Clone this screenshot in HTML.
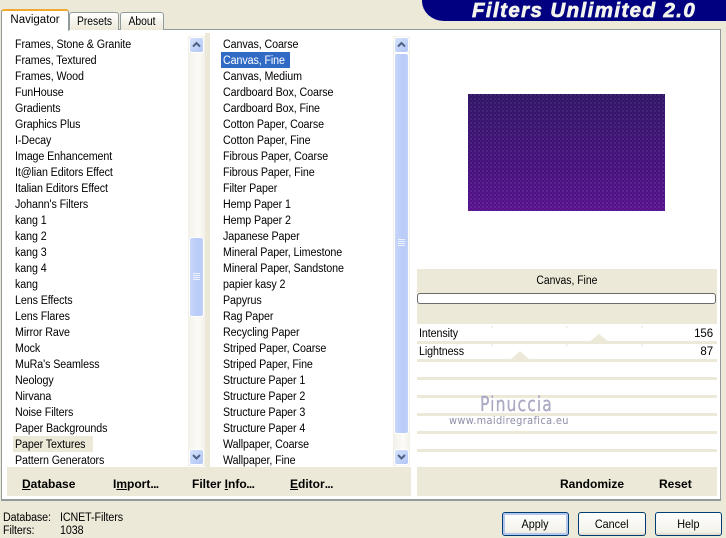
<!DOCTYPE html>
<html><head><meta charset="utf-8"><style>
html,body{margin:0;padding:0;width:726px;height:538px;overflow:hidden;background:#ece9d8}
body{position:relative;font-family:"Liberation Sans",sans-serif;font-size:11.5px;color:#000}
div{position:absolute;box-sizing:border-box;white-space:nowrap}
.it{height:16px;line-height:16px;letter-spacing:-.1px}
.s{transform:scaleX(.93);transform-origin:0 0}
.c{display:inline-block;transform:scaleX(.9);transform-origin:50% 50%}
.d{letter-spacing:-.6px}
.b{font-weight:bold;font-size:12px;top:477px;line-height:15px}
.sb{width:15px;height:16px;border:1px solid #fff;border-radius:3px;background:linear-gradient(135deg,#d6e2fb,#b0c6f5)}
.track{width:17px;background:linear-gradient(90deg,#f2f0e8,#fbfbf8 60%,#f2f0e8)}
.btn{height:24px;border:1px solid #003c74;border-radius:3px;background:linear-gradient(#fff,#f3f2ea 85%,#dcd8c8);text-align:center;line-height:22px;font-size:12px}
.sep{left:417px;width:300px;height:3px;background:#ece9d8}
svg{position:absolute;overflow:visible}
</style></head><body>
<div style="left:422px;top:0;width:304px;height:21px;background:#000080;border-bottom-left-radius:22px 20px"></div>
<div style="left:472px;top:0;height:21px;line-height:21px;color:#f4f4ee;font-weight:bold;font-style:italic;font-size:20.5px;letter-spacing:1.4px;-webkit-text-stroke:.7px #f4f4ee">Filters Unlimited 2.0</div>

<div style="left:1px;top:29px;width:720px;height:472px;background:#fff;border:1px solid #919b9c;border-width:1px 1px 2px 1px"></div>

<div style="left:69px;top:12px;width:50px;height:18px;background:linear-gradient(#fff,#ece9d8);border:1px solid #919b9c;border-bottom:0;border-radius:3px 3px 0 0;text-align:center;line-height:19px"><span class="c">Presets</span></div>
<div style="left:120px;top:12px;width:44px;height:18px;background:linear-gradient(#fff,#ece9d8);border:1px solid #919b9c;border-bottom:0;border-radius:3px 3px 0 0;text-align:center;line-height:19px"><span class="c">About</span></div>
<div style="left:1px;top:9px;width:68px;height:22px;background:#fff;border:1px solid #919b9c;border-top:2px solid #f0a830;border-bottom:0;border-radius:3px 3px 0 0;text-align:center;line-height:18px">Navigator</div>

<div style="left:205px;top:33px;width:5px;height:434px;background:#ece9d8"></div>

<div style="left:13px;top:436px;width:80px;height:16px;background:#ece9d8"></div>
<div style="left:221px;top:52px;width:69px;height:16px;background:#316ac5"></div>

<div class="s" style="left:15px;top:37px">
<div class="it" style="top:0">Frames, Stone &amp; Granite</div>
<div class="it" style="top:16px">Frames, Textured</div>
<div class="it" style="top:32px">Frames, Wood</div>
<div class="it" style="top:48px">FunHouse</div>
<div class="it" style="top:64px">Gradients</div>
<div class="it" style="top:80px">Graphics Plus</div>
<div class="it" style="top:96px">I-Decay</div>
<div class="it" style="top:112px">Image Enhancement</div>
<div class="it" style="top:128px">It@lian Editors Effect</div>
<div class="it" style="top:144px">Italian Editors Effect</div>
<div class="it" style="top:160px">Johann's Filters</div>
<div class="it" style="top:176px">kang 1</div>
<div class="it" style="top:192px">kang 2</div>
<div class="it" style="top:208px">kang 3</div>
<div class="it" style="top:224px">kang 4</div>
<div class="it" style="top:240px">kang</div>
<div class="it" style="top:256px">Lens Effects</div>
<div class="it" style="top:272px">Lens Flares</div>
<div class="it" style="top:288px">Mirror Rave</div>
<div class="it" style="top:304px">Mock</div>
<div class="it" style="top:320px">MuRa's Seamless</div>
<div class="it" style="top:336px">Neology</div>
<div class="it" style="top:352px">Nirvana</div>
<div class="it" style="top:368px">Noise Filters</div>
<div class="it" style="top:384px">Paper Backgrounds</div>
<div class="it" style="top:400px">Paper Textures</div>
<div class="it" style="top:416px">Pattern Generators</div>
</div>

<div class="s" style="left:223px;top:37px">
<div class="it" style="top:0">Canvas, Coarse</div>
<div class="it" style="top:16px;color:#fff">Canvas, Fine</div>
<div class="it" style="top:32px">Canvas, Medium</div>
<div class="it" style="top:48px">Cardboard Box, Coarse</div>
<div class="it" style="top:64px">Cardboard Box, Fine</div>
<div class="it" style="top:80px">Cotton Paper, Coarse</div>
<div class="it" style="top:96px">Cotton Paper, Fine</div>
<div class="it" style="top:112px">Fibrous Paper, Coarse</div>
<div class="it" style="top:128px">Fibrous Paper, Fine</div>
<div class="it" style="top:144px">Filter Paper</div>
<div class="it" style="top:160px">Hemp Paper 1</div>
<div class="it" style="top:176px">Hemp Paper 2</div>
<div class="it" style="top:192px">Japanese Paper</div>
<div class="it" style="top:208px">Mineral Paper, Limestone</div>
<div class="it" style="top:224px">Mineral Paper, Sandstone</div>
<div class="it" style="top:240px">papier kasy 2</div>
<div class="it" style="top:256px">Papyrus</div>
<div class="it" style="top:272px">Rag Paper</div>
<div class="it" style="top:288px">Recycling Paper</div>
<div class="it" style="top:304px">Striped Paper, Coarse</div>
<div class="it" style="top:320px">Striped Paper, Fine</div>
<div class="it" style="top:336px">Structure Paper 1</div>
<div class="it" style="top:352px">Structure Paper 2</div>
<div class="it" style="top:368px">Structure Paper 3</div>
<div class="it" style="top:384px">Structure Paper 4</div>
<div class="it" style="top:400px">Wallpaper, Coarse</div>
<div class="it" style="top:416px">Wallpaper, Fine</div>
</div>

<div class="track" style="left:188px;top:36px;height:430px"></div>
<div class="sb" style="left:189px;top:37px"></div>
<svg style="left:189px;top:37px" width="15" height="16"><path d="M4 9.5L7.5 6L11 9.5" fill="none" stroke="#4d6185" stroke-width="2"/></svg>
<div class="sb" style="left:189px;top:237px;height:80px;background:linear-gradient(90deg,#c8d6f8,#b8cbf8 60%,#c0d0f8)"></div>
<svg style="left:189px;top:237px" width="15" height="80"><path d="M4 36.5H11M4 38.5H11M4 40.5H11M4 42.5H11" stroke="#eef2fd" stroke-width="1"/></svg>
<div class="sb" style="left:189px;top:449px"></div>
<svg style="left:189px;top:449px" width="15" height="16"><path d="M4 6L7.5 9.5L11 6" fill="none" stroke="#4d6185" stroke-width="2"/></svg>

<div class="track" style="left:393px;top:36px;height:430px"></div>
<div class="sb" style="left:394px;top:37px"></div>
<svg style="left:394px;top:37px" width="15" height="16"><path d="M4 9.5L7.5 6L11 9.5" fill="none" stroke="#4d6185" stroke-width="2"/></svg>
<div class="sb" style="left:394px;top:53px;height:381px;background:linear-gradient(90deg,#c8d6f8,#b8cbf8 60%,#c0d0f8)"></div>
<svg style="left:394px;top:53px" width="15" height="381"><path d="M4 186.5H11M4 188.5H11M4 190.5H11M4 192.5H11" stroke="#eef2fd" stroke-width="1"/></svg>
<div class="sb" style="left:394px;top:449px"></div>
<svg style="left:394px;top:449px" width="15" height="16"><path d="M4 6L7.5 9.5L11 6" fill="none" stroke="#4d6185" stroke-width="2"/></svg>

<div style="left:468px;top:94px;width:197px;height:117px;background:linear-gradient(#36186e,#42187c 30%,#4e1688 65%,#60169a)"></div>
<svg style="left:468px;top:94px" width="197" height="117">
<defs><pattern id="w" width="4" height="4" patternUnits="userSpaceOnUse"><rect width="2" height="2" fill="#000" fill-opacity=".13"/><rect x="2" y="2" width="2" height="2" fill="#000" fill-opacity=".13"/><rect x="2" width="2" height="2" fill="#fff" fill-opacity=".05"/></pattern></defs>
<rect width="197" height="117" fill="url(#w)"/></svg>

<div style="left:417px;top:269px;width:300px;height:55px;background:#ece9d8;text-align:center;line-height:25px"><span class="c">Canvas, Fine</span></div>
<div style="left:417px;top:293px;width:299px;height:11px;background:#fff;border:1px solid #6b6b6b;border-radius:3px"></div>

<div class="sep" style="top:341px"></div>
<div class="sep" style="top:359px"></div>
<div class="sep" style="top:377px"></div>
<div class="sep" style="top:395px"></div>
<div class="sep" style="top:413px"></div>
<div class="sep" style="top:431px"></div>
<div class="sep" style="top:449px"></div>

<div class="it s" style="left:419px;top:326px">Intensity</div>
<div class="it s" style="left:419px;top:344px">Lightness</div>
<div class="it" style="right:13px;top:326px">156</div>
<div class="it" style="right:13px;top:344px">87</div>
<svg style="left:417px;top:325px" width="300" height="36">
<path d="M75 1V3M150 1V3M225 1V3M75 19V21M150 19V21M225 19V21" stroke="#e4e1d2"/>
<path d="M172 17L182 9L192 17Z" fill="#ece9d8"/>
<path d="M93 35L103 26L113 35Z" fill="#ece9d8"/>
</svg>

<div style="left:480px;top:392px;font-size:20px;letter-spacing:1.4px;line-height:24px;color:#a9a9c3;font-family:'DejaVu Sans',sans-serif;transform-origin:left;transform:scaleX(.78);-webkit-text-stroke:.3px #a9a9c3">Pinuccia</div>
<div style="left:449px;top:414px;font-size:11px;letter-spacing:.4px;line-height:14px;color:#8e8ea8;font-family:'DejaVu Sans',sans-serif;transform-origin:left;transform:scaleX(.89)">www.maidiregrafica.eu</div>

<div style="left:7px;top:467px;width:404px;height:29px;background:#ece9d8"></div>
<div style="left:417px;top:467px;width:300px;height:29px;background:#ece9d8"></div>
<div class="b" style="left:22px"><u>D</u>atabase</div>
<div class="b" style="left:113px">I<u>m</u>port<span class="d">...</span></div>
<div class="b" style="left:192px">Filter <u>I</u>nf<span style="letter-spacing:-.5px">o</span><span class="d">...</span></div>
<div class="b" style="left:290px"><u>E</u>ditor<span class="d">...</span></div>
<div class="b" style="left:560px">Randomize</div>
<div class="b" style="left:659px">Reset</div>

<div class="it s" style="left:3px;top:511px;height:15px;line-height:15px">Database:</div>
<div class="it s" style="left:60px;top:511px;height:15px;line-height:15px">ICNET-Filters</div>
<div class="it s" style="left:3px;top:524px;height:15px;line-height:15px">Filters:</div>
<div class="it s" style="left:60px;top:524px;height:15px;line-height:15px">1038</div>

<div class="btn" style="left:502px;top:512px;width:67px;box-shadow:inset 0 0 0 2px #b4c8ee"><span class="c">Apply</span></div>
<div class="btn" style="left:578px;top:512px;width:68px"><span class="c">Cancel</span></div>
<div class="btn" style="left:655px;top:512px;width:67px"><span class="c">Help</span></div>
</body></html>
